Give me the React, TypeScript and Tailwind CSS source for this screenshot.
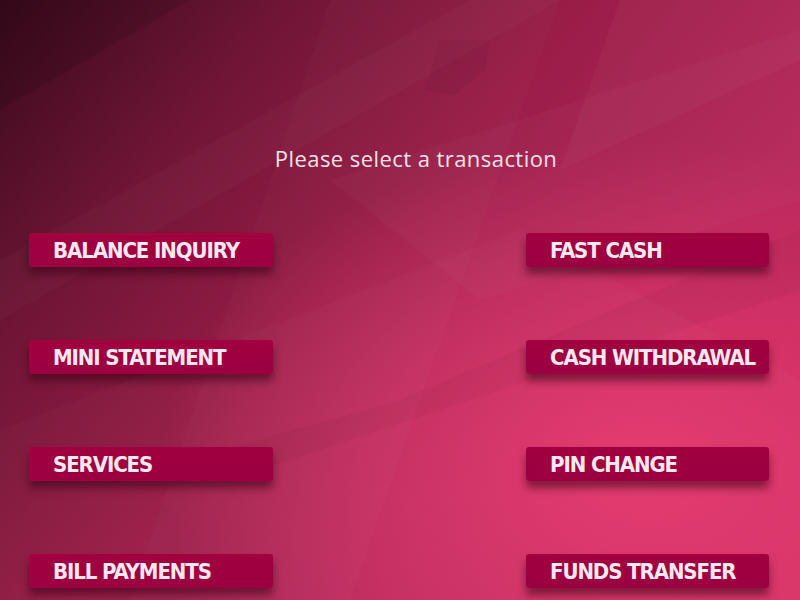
import React from "react";

const left = ["BALANCE INQUIRY", "MINI STATEMENT", "SERVICES", "BILL PAYMENTS"];
const right = ["FAST CASH", "CASH WITHDRAWAL", "PIN CHANGE", "FUNDS TRANSFER"];

function Btn({ label }: { label: string }) {
  return (
    <div
      className="h-[34px] rounded-[3px] bg-[linear-gradient(180deg,#a2003f_0%,#9b0040_100%)] shadow-[0_7px_9px_rgba(55,0,20,0.55)] flex items-center pl-[24px] pt-[2px] text-[22px] font-bold text-[#fde8f2] tracking-[-0.05em] leading-none"
      style={{ fontFamily: '"DejaVu Sans Condensed", "DejaVu Sans", sans-serif', fontStretch: "condensed" }}
    >
      {label}
    </div>
  );
}

export default function App() {
  return (
    <div className="relative w-[800px] h-[600px] overflow-hidden bg-[radial-gradient(ellipse_60%_55%_at_80%_78%,#e5396f_0%,rgba(229,57,111,0)_100%),linear-gradient(130deg,#380a1b_0%,#6f1535_22%,#9a1d48_45%,#b6265a_70%,#cf2f63_100%)]">
      <svg className="absolute inset-0" width="800" height="600" viewBox="0 0 800 600">
        <polygon points="0,0 190,0 0,110" fill="#000" opacity="0.1" />
        <polygon points="0,260 470,0 560,0 0,320" fill="#fff" opacity="0.025" />
        <polygon points="330,0 560,0 350,600 130,600" fill="#fff" opacity="0.02" />
        <polygon points="620,0 800,0 800,60 560,170" fill="#fff" opacity="0.03" />
        <polygon points="330,180 800,30 800,200 480,300" fill="#fff" opacity="0.025" />
        <polygon points="150,470 400,400 800,230 800,290 260,470" fill="#000" opacity="0.035" />
        <polygon points="0,600 0,430 520,230 800,380 800,600" fill="#fff" opacity="0.02" />
        <polygon points="440,40 490,40 485,70 455,95 425,90" fill="#000" opacity="0.04" />
      </svg>
      <div className="relative flex flex-col">
        <div
          className="pt-[145px] pl-[32px] text-center text-[22px] font-medium tracking-[0.02em] text-[#f9e0ec] leading-[26px]"
          style={{ fontFamily: '"Open Sans", sans-serif' }}
        >
          Please select a transaction
        </div>
        <div className="mt-[62px] flex">
          <div className="ml-[29px] w-[244px] flex flex-col gap-[73px]">
            {left.map((l) => (
              <Btn key={l} label={l} />
            ))}
          </div>
          <div className="ml-[253px] w-[243px] flex flex-col gap-[73px]">
            {right.map((l) => (
              <Btn key={l} label={l} />
            ))}
          </div>
        </div>
      </div>
    </div>
  );
}
